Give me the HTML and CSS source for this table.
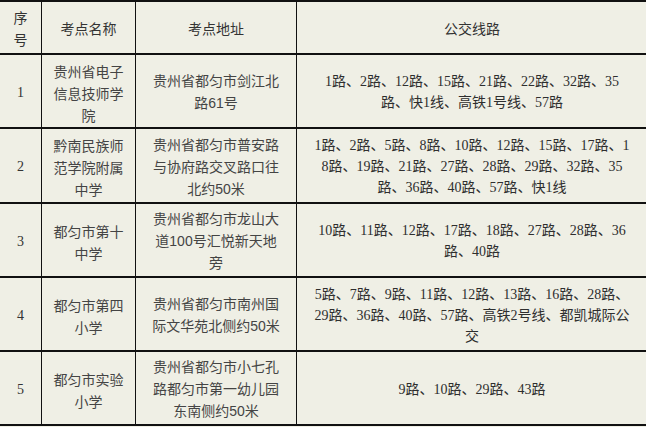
FILE: index.html
```html
<!DOCTYPE html>
<html lang="zh">
<head>
<meta charset="utf-8">
<link rel="stylesheet" href="styles.css">
</head>
<body>
<div class="table">
  <div class="cell head c1">序<br>号</div>
  <div class="cell head c2">考点名称</div>
  <div class="cell head c3">考点地址</div>
  <div class="cell head c4">公交线路</div>

  <div class="cell num r1">1</div>
  <div class="cell name r1">贵州省电子<br>信息技师学<br>院</div>
  <div class="cell addr r1">贵州省都匀市剑江北<br>路61号</div>
  <div class="cell bus r1">1路、2路、12路、15路、21路、22路、32路、35<br>路、快1线、高铁1号线、57路</div>

  <div class="cell num r2">2</div>
  <div class="cell name r2">黔南民族师<br>范学院附属<br>中学</div>
  <div class="cell addr r2">贵州省都匀市普安路<br>与协府路交叉路口往<br>北约50米</div>
  <div class="cell bus r2">1路、2路、5路、8路、10路、12路、15路、17路、1<br>8路、19路、21路、27路、28路、29路、32路、35<br>路、36路、40路、57路、快1线</div>

  <div class="cell num r3">3</div>
  <div class="cell name r3">都匀市第十<br>中学</div>
  <div class="cell addr r3">贵州省都匀市龙山大<br>道100号汇悦新天地<br>旁</div>
  <div class="cell bus r3">10路、11路、12路、17路、18路、27路、28路、36<br>路、40路</div>

  <div class="cell num r4">4</div>
  <div class="cell name r4">都匀市第四<br>小学</div>
  <div class="cell addr r4">贵州省都匀市南州国<br>际文华苑北侧约50米</div>
  <div class="cell bus r4">5路、7路、9路、11路、12路、13路、16路、28路、<br>29路、36路、40路、57路、高铁2号线、都凯城际公<br>交</div>

  <div class="cell num r5">5</div>
  <div class="cell name r5">都匀市实验<br>小学</div>
  <div class="cell addr r5">贵州省都匀市小七孔<br>路都匀市第一幼儿园<br>东南侧约50米</div>
  <div class="cell bus r5">9路、10路、29路、43路</div>
</div>
</body>
</html>
```
FILE: styles.css
```css
html, body {
  margin: 0;
  padding: 0;
  background: #efefe5;
}

.table {
  display: grid;
  grid-template-columns: 42px 94px 161px 1fr;
  grid-template-rows: 53px 74px 75px 74px 74px 74px;
  width: 647px;
  border-top: 2px solid #111;
  font-family: "Noto Sans CJK SC", sans-serif;
  font-size: 14px;
  line-height: 21px;
  color: #3a3a3a;
}

.cell {
  display: flex;
  align-items: center;
  justify-content: center;
  text-align: center;
  border-bottom: 2px solid #111;
  border-right: 1px solid #111;
  white-space: nowrap;
  box-sizing: border-box;
}

.c4, .bus {
  border-right: none;
}

.head {
  line-height: 22px;
  color: #333;
}

.num {
  font-family: "Liberation Serif", "Noto Sans CJK SC", serif;
  color: #333;
  padding-top: 2px;
}

.name {
  line-height: 22px;
  color: #444;
  padding-top: 3px;
}

.addr {
  font-family: "Liberation Sans", "Noto Sans CJK SC", sans-serif;
  line-height: 22px;
  color: #444;
  padding-top: 2px;
}

.bus {
  font-family: "Liberation Serif", "Noto Sans CJK SC", serif;
  color: #2e2e2e;
  padding-top: 2px;
}
```
